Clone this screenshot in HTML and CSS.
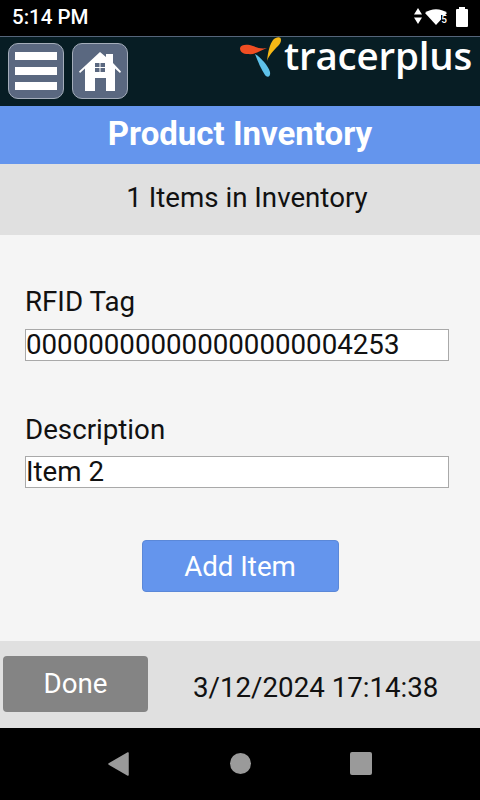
FILE: index.html
```html
<!DOCTYPE html>
<html lang="en">
<head>
  <meta charset="UTF-8">
  <meta name="viewport" content="width=device-width, initial-scale=1.0">
  <title>Product Inventory</title>
  <link rel="stylesheet" href="styles.css">
</head>
<body>

  <!-- Android status bar -->
  <div class="status-bar">
    <span class="clock">5:14 PM</span>
    <div class="status-icons">
      <svg class="arrows" width="8" height="16" viewBox="0 0 8 16"><path d="M4 0L8 6.500H0zM4 16L0 9.500H8z" fill="#fff"/></svg>
      <svg width="22" height="16" viewBox="0 0 22 16"><path d="M0 4C6 -1 16 -1 22 4L11 16z" fill="#fff"/></svg>
      <span class="wifi-num">5</span>
      <svg class="battery" width="12" height="20" viewBox="0 0 12 20"><path d="M3 0h6v2h2a1 1 0 0 1 1 1v16a1 1 0 0 1-1 1h-10a1 1 0 0 1-1-1v-16a1 1 0 0 1 1-1h2z" fill="#fff"/></svg>
    </div>
  </div>

  <!-- App header -->
  <div class="app-header">
    <button class="icon-btn">
      <svg width="44" height="40" viewBox="0 0 44 40"><path d="M1 1h42v8h-42zM1 16h42v8h-42zM1 31h42v8h-42z" fill="#fff"/></svg>
    </button>
    <button class="icon-btn">
      <svg width="42" height="40" viewBox="0 0 42 40"><path fill-rule="evenodd" fill="#fff" d="M21 1L27 6V3H34V12L42 20.500 41 22 36 17.500V40H27V27H16V40H6V17.500L1 22 0 20.500zM16 12V16H20.500V12zM21.500 12V16H26V12zM16 17V21H20.500V17zM21.500 17V21H26V17z"/></svg>
    </button>
    <div class="logo">
      <svg width="44" height="42" viewBox="0 0 44 42">
        <path d="M0 11C1 7 8 7 13 9C18 11 22 12 27 11C20 14 14 18 8 17C3 17 0 15 0 11z" fill="#f04e23"/>
        <path d="M41 3C41 -1 36 0 33 3C30 7 28 14 27 24C29 18 34 13 38 9C40 7 41 5 41 3z" fill="#f7b916"/>
        <path d="M15 17C20 20 28 28 30 35C31 40 27 41 25 38C21 32 18 25 15 17z" fill="#5dc1ea"/>
      </svg>
      <span class="logo-text">tracerplus</span>
    </div>
  </div>

  <div class="title-bar">Product Inventory</div>
  <div class="count-bar">1 Items in Inventory</div>

  <div class="content">
    <label class="field-label" for="rfidTag">RFID Tag</label>
    <input class="field-input" type="text" id="rfidTag" value="000000000000000000004253">

    <label class="field-label second" for="description">Description</label>
    <input class="field-input" type="text" id="description" value="Item 2">

    <button class="add-btn">Add Item</button>
  </div>

  <div class="footer">
    <button class="done-btn">Done</button>
    <span class="timestamp">3/12/2024 17:14:38</span>
  </div>

  <!-- Android nav bar -->
  <div class="nav-bar">
    <svg class="nav-back" width="21" height="24" viewBox="0 0 21 24"><path d="M20 1V23L1 12z" fill="#9a9a9a" stroke="#9a9a9a" stroke-width="1.500" stroke-linejoin="round"/></svg>
    <svg width="21" height="21" viewBox="0 0 21 21"><circle cx="10.500" cy="10.500" r="10.500" fill="#9a9a9a"/></svg>
    <svg width="22" height="23" viewBox="0 0 22 23"><rect width="22" height="23" rx="2" fill="#9a9a9a"/></svg>
  </div>

</body>
</html>
```

FILE: styles.css
```css
html, body {
  margin: 0;
  padding: 0;
}

body {
  width: 480px;
  height: 800px;
  display: flex;
  flex-direction: column;
  overflow: hidden;
  font-family: Roboto, "Liberation Sans", sans-serif;
  font-size: 27.700px;
  background-color: #f5f5f5;
  color: #111;
}

.status-bar {
  height: 36px;
  flex: none;
  background-color: #000;
  color: #fff;
  display: flex;
  align-items: center;
  justify-content: space-between;
  padding: 0 12px 2px 12px;
  box-sizing: border-box;
}

.clock {
  font-size: 20.500px;
  font-weight: 500;
}

.status-icons {
  display: flex;
  align-items: center;
  gap: 3px;
  position: relative;
}

.arrows {
  margin-bottom: 3px;
}

.wifi-num {
  position: absolute;
  right: 21px;
  bottom: 2px;
  font-size: 10px;
  font-weight: 500;
  color: #fff;
  background-color: #000;
  line-height: 10px;
}

.battery {
  margin-left: 6px;
}

.app-header {
  height: 70px;
  flex: none;
  box-sizing: border-box;
  border-top: 1px solid #55657a;
  background-color: #071d24;
  display: flex;
  align-items: flex-start;
  gap: 8px;
  padding: 6px 8px 0;
  position: relative;
}

.icon-btn {
  width: 56px;
  height: 56px;
  padding: 0;
  background-color: #5a6880;
  border: 1px solid #a4adba;
  border-radius: 10px;
  display: flex;
  align-items: center;
  justify-content: center;
}

.logo {
  position: absolute;
  left: 240px;
  top: 0;
  display: flex;
  align-items: flex-start;
}

.logo-text {
  font-family: "Open Sans", sans-serif;
  font-weight: 600;
  font-size: 38.500px;
  line-height: 37px;
  color: #fff;
  letter-spacing: -0.2px;
}

.title-bar {
  height: 58px;
  flex: none;
  box-sizing: border-box;
  padding-bottom: 4px;
  background-color: #6495ed;
  color: #fff;
  font-size: 33px;
  font-weight: 700;
  display: flex;
  align-items: center;
  justify-content: center;
}

.count-bar {
  height: 71px;
  flex: none;
  box-sizing: border-box;
  padding: 0 0 4px 14px;
  background-color: #e0e0e0;
  display: flex;
  align-items: center;
  justify-content: center;
}

.content {
  flex: 1;
  display: flex;
  flex-direction: column;
  padding: 51px 31px 0 25px;
}

.field-label {
  line-height: 32px;
  margin-bottom: 11px;
}

.field-label.second {
  margin-top: 53px;
  margin-bottom: 10px;
}

.field-input {
  width: 100%;
  height: 32px;
  box-sizing: border-box;
  border: 1px solid #a9a9a9;
  background-color: #fff;
  padding: 0 0 2px;
  margin: 0;
  font-family: Roboto, sans-serif;
  font-size: 27.700px;
  color: #111;
  border-radius: 0;
  outline: none;
}

.add-btn {
  align-self: center;
  width: 197px;
  height: 52px;
  margin-top: 52px;
  margin-left: 6px;
  background-color: #6495ed;
  color: #fff;
  border: 1px solid #5b88d8;
  border-radius: 4px;
  font-family: Roboto, sans-serif;
  font-size: 27.700px;
}

.footer {
  height: 87px;
  flex: none;
  box-sizing: border-box;
  background-color: #e0e0e0;
  display: flex;
  align-items: flex-start;
  padding: 15px 0 0 3px;
}

.done-btn {
  width: 145px;
  height: 56px;
  background-color: #848484;
  color: #fff;
  border: none;
  border-radius: 4px;
  font-family: Roboto, sans-serif;
  font-size: 27.700px;
  padding: 0 0 2px;
}

.timestamp {
  margin-left: 45px;
  margin-top: 15px;
}

.nav-bar {
  height: 72px;
  flex: none;
  background-color: #000;
  display: flex;
  align-items: center;
  justify-content: center;
  gap: 99px;
  padding-bottom: 1px;
  box-sizing: border-box;
}

.nav-back {
  margin-right: 2px;
}
```
